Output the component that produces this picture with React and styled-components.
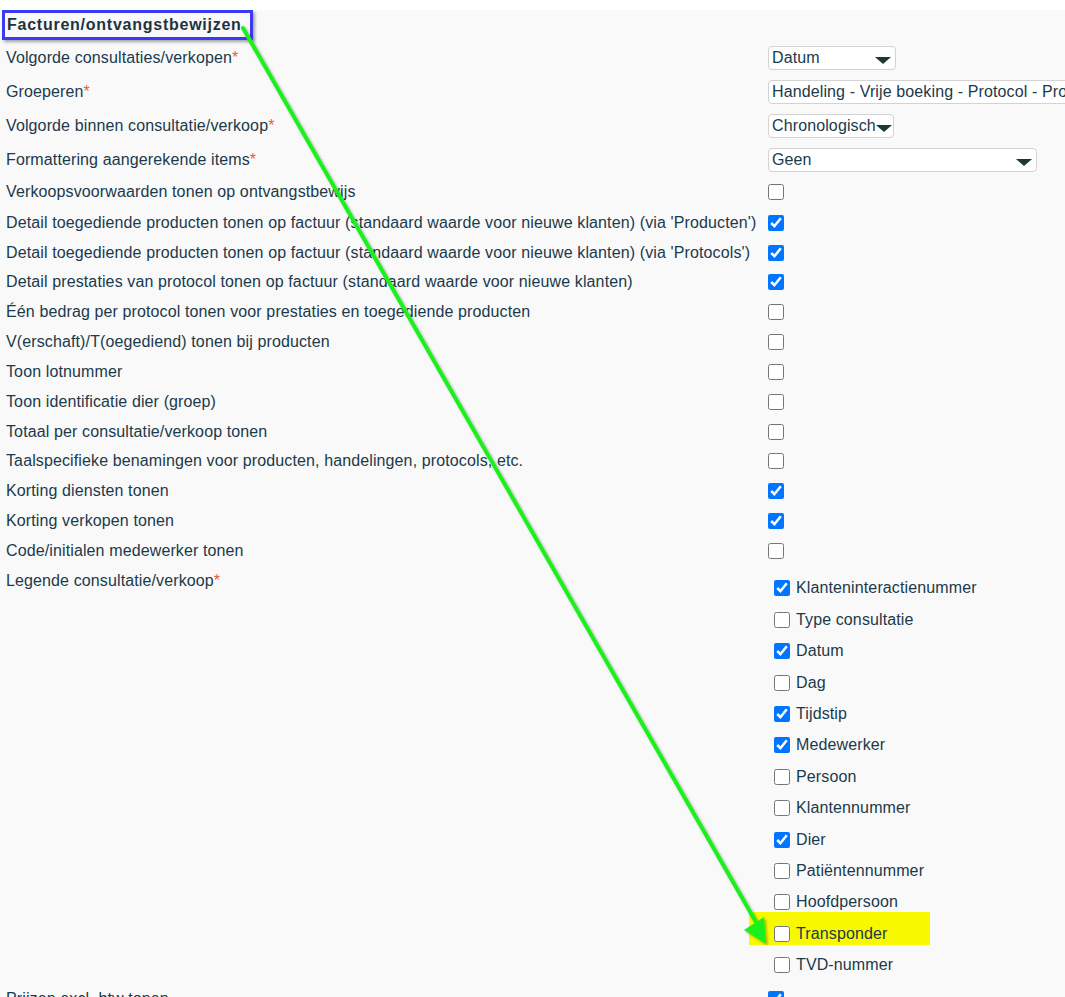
import React from "react";
import styled, { createGlobalStyle } from "styled-components";

const GlobalStyle = createGlobalStyle`
  html, body { margin: 0; padding: 0; background: #ffffff; }
  body { font-family: "Liberation Sans", Arial, sans-serif; color: #1b3a4b; overflow: hidden; }
`;

const Page = styled.div`
  position: relative;
  isolation: isolate;
  margin-top: 10px;
  background: #f9f9f9;
  min-height: 1000px;
  width: 1065px;
  overflow: hidden;
  padding-left: 6px;
  box-sizing: border-box;
  font-size: 16px;
  letter-spacing: 0.12px;
`;

const TitleBox = styled.div`
  display: inline-flex;
  align-items: center;
  margin-left: -4px;
  height: 30px;
  box-sizing: border-box;
  border: 3px solid #3a3af5;
  box-shadow: 2px 2px 3px rgba(0, 0, 0, 0.35);
  padding: 0 8px 0 2px;
  font-weight: bold;
  font-size: 16px;
  letter-spacing: 0.75px;
  color: #1d3340;
`;

const Form = styled.div`
  display: flex;
  flex-direction: column;
  margin-top: 1px;
`;

const Row = styled.div`
  display: grid;
  grid-template-columns: 762px 1fr;
  min-height: ${(p) => p.$h}px;
  align-items: ${(p) => (p.$top ? "start" : "center")};
`;

const Label = styled.div`
  white-space: nowrap;
  line-height: ${(p) => (p.$lh ? p.$lh + "px" : "normal")};
`;

const Req = styled.span`
  color: #e8603c;
`;

const Control = styled.div`
  display: flex;
  align-items: center;
  min-width: 0;
`;

const SelectBox = styled.div`
  display: flex;
  align-items: center;
  justify-content: space-between;
  box-sizing: border-box;
  width: ${(p) => p.$w}px;
  flex-shrink: 0;
  height: 24px;
  border: 1px solid #d3d3d3;
  border-radius: 4px;
  background: #ffffff;
  padding: 0 4px 0 3px;
  white-space: nowrap;
  overflow: hidden;
  color: #1b3a4b;
`;

const Caret = styled.span`
  flex-shrink: 0;
  width: 0;
  height: 0;
  border-left: 8px solid transparent;
  border-right: 8px solid transparent;
  border-top: 7px solid #1c3836;
  margin-top: 4px;
`;

const Check = styled.input.attrs({ type: "checkbox", readOnly: true })`
  width: 16px;
  height: 16px;
  margin: 0;
  flex-shrink: 0;
  accent-color: #0075ff;
`;

const LegendList = styled.div`
  display: flex;
  flex-direction: column;
  padding: 7px 0 3px 6px;
`;

const LegendItem = styled.label`
  position: relative;
  display: flex;
  align-items: center;
  gap: 6px;
  height: 31.4px;
  width: fit-content;
  color: #1b3a4b;
  &::before {
    content: "";
    display: ${(p) => (p.$hl ? "block" : "none")};
    position: absolute;
    z-index: -1;
    left: -25px;
    width: 181px;
    top: -6px;
    height: 33px;
    background: #f8f800;
  }
`;

const Overlay = styled.svg`
  position: absolute;
  left: 0;
  top: -10px;
  width: 1065px;
  height: 997px;
  pointer-events: none;
`;

const selects = [
  { label: "Volgorde consultaties/verkopen", value: "Datum", w: 128 },
  { label: "Groeperen", value: "Handeling - Vrije boeking - Protocol - Protocol verkoop", w: 430 },
  { label: "Volgorde binnen consultatie/verkoop", value: "Chronologisch", w: 126 },
  { label: "Formattering aangerekende items", value: "Geen", w: 269 },
];

const checks = [
  ["Verkoopsvoorwaarden tonen op ontvangstbewijs", false],
  ["Detail toegediende producten tonen op factuur (standaard waarde voor nieuwe klanten) (via 'Producten')", true],
  ["Detail toegediende producten tonen op factuur (standaard waarde voor nieuwe klanten) (via 'Protocols')", true],
  ["Detail prestaties van protocol tonen op factuur (standaard waarde voor nieuwe klanten)", true],
  ["Één bedrag per protocol tonen voor prestaties en toegediende producten", false],
  ["V(erschaft)/T(oegediend) tonen bij producten", false],
  ["Toon lotnummer", false],
  ["Toon identificatie dier (groep)", false],
  ["Totaal per consultatie/verkoop tonen", false],
  ["Taalspecifieke benamingen voor producten, handelingen, protocols, etc.", false],
  ["Korting diensten tonen", true],
  ["Korting verkopen tonen", true],
  ["Code/initialen medewerker tonen", false],
];

const legend = [
  ["Klanteninteractienummer", true],
  ["Type consultatie", false],
  ["Datum", true],
  ["Dag", false],
  ["Tijdstip", true],
  ["Medewerker", true],
  ["Persoon", false],
  ["Klantennummer", false],
  ["Dier", true],
  ["Patiëntennummer", false],
  ["Hoofdpersoon", false],
  ["Transponder", false, true],
  ["TVD-nummer", false],
];

export default function App() {
  return (
    <>
      <GlobalStyle />
      <Page>
        <TitleBox>Facturen/ontvangstbewijzen</TitleBox>
        <Form>
          {selects.map((s) => (
            <Row key={s.label} $h={34}>
              <Label>
                {s.label}
                <Req>*</Req>
              </Label>
              <Control>
                <SelectBox $w={s.w}>
                  <span>{s.value}</span>
                  {s.w < 400 && <Caret />}
                </SelectBox>
              </Control>
            </Row>
          ))}
          {checks.map(([label, on], i) => (
            <Row key={label} $h={i === 0 ? 30.83 : 29.83}>
              <Label>{label}</Label>
              <Control>
                <Check defaultChecked={on} />
              </Control>
            </Row>
          ))}
          <Row $h={30} $top>
            <Label $lh={30}>
              Legende consultatie/verkoop<Req>*</Req>
            </Label>
            <LegendList>
              {legend.map(([label, on, hl]) => (
                <LegendItem key={label} $hl={hl}>
                  <Check defaultChecked={on} />
                  {label}
                </LegendItem>
              ))}
            </LegendList>
          </Row>
          <Row $h={30}>
            <Label>Prijzen excl. btw tonen</Label>
            <Control>
              <Check defaultChecked />
            </Control>
          </Row>
        </Form>
        <Overlay viewBox="0 0 1065 997">
          <defs>
            <filter id="sh" x="-10%" y="-10%" width="120%" height="120%">
              <feDropShadow dx="1.5" dy="1.5" stdDeviation="1.2" floodColor="#000" floodOpacity="0.35" />
            </filter>
          </defs>
          <g filter="url(#sh)">
            <line x1="243" y1="28" x2="756" y2="922" stroke="#1ef01e" strokeWidth="4" strokeLinecap="round" />
            <polygon points="766,944 744,930 764,917" fill="#1ef01e" />
          </g>
        </Overlay>
      </Page>
    </>
  );
}
